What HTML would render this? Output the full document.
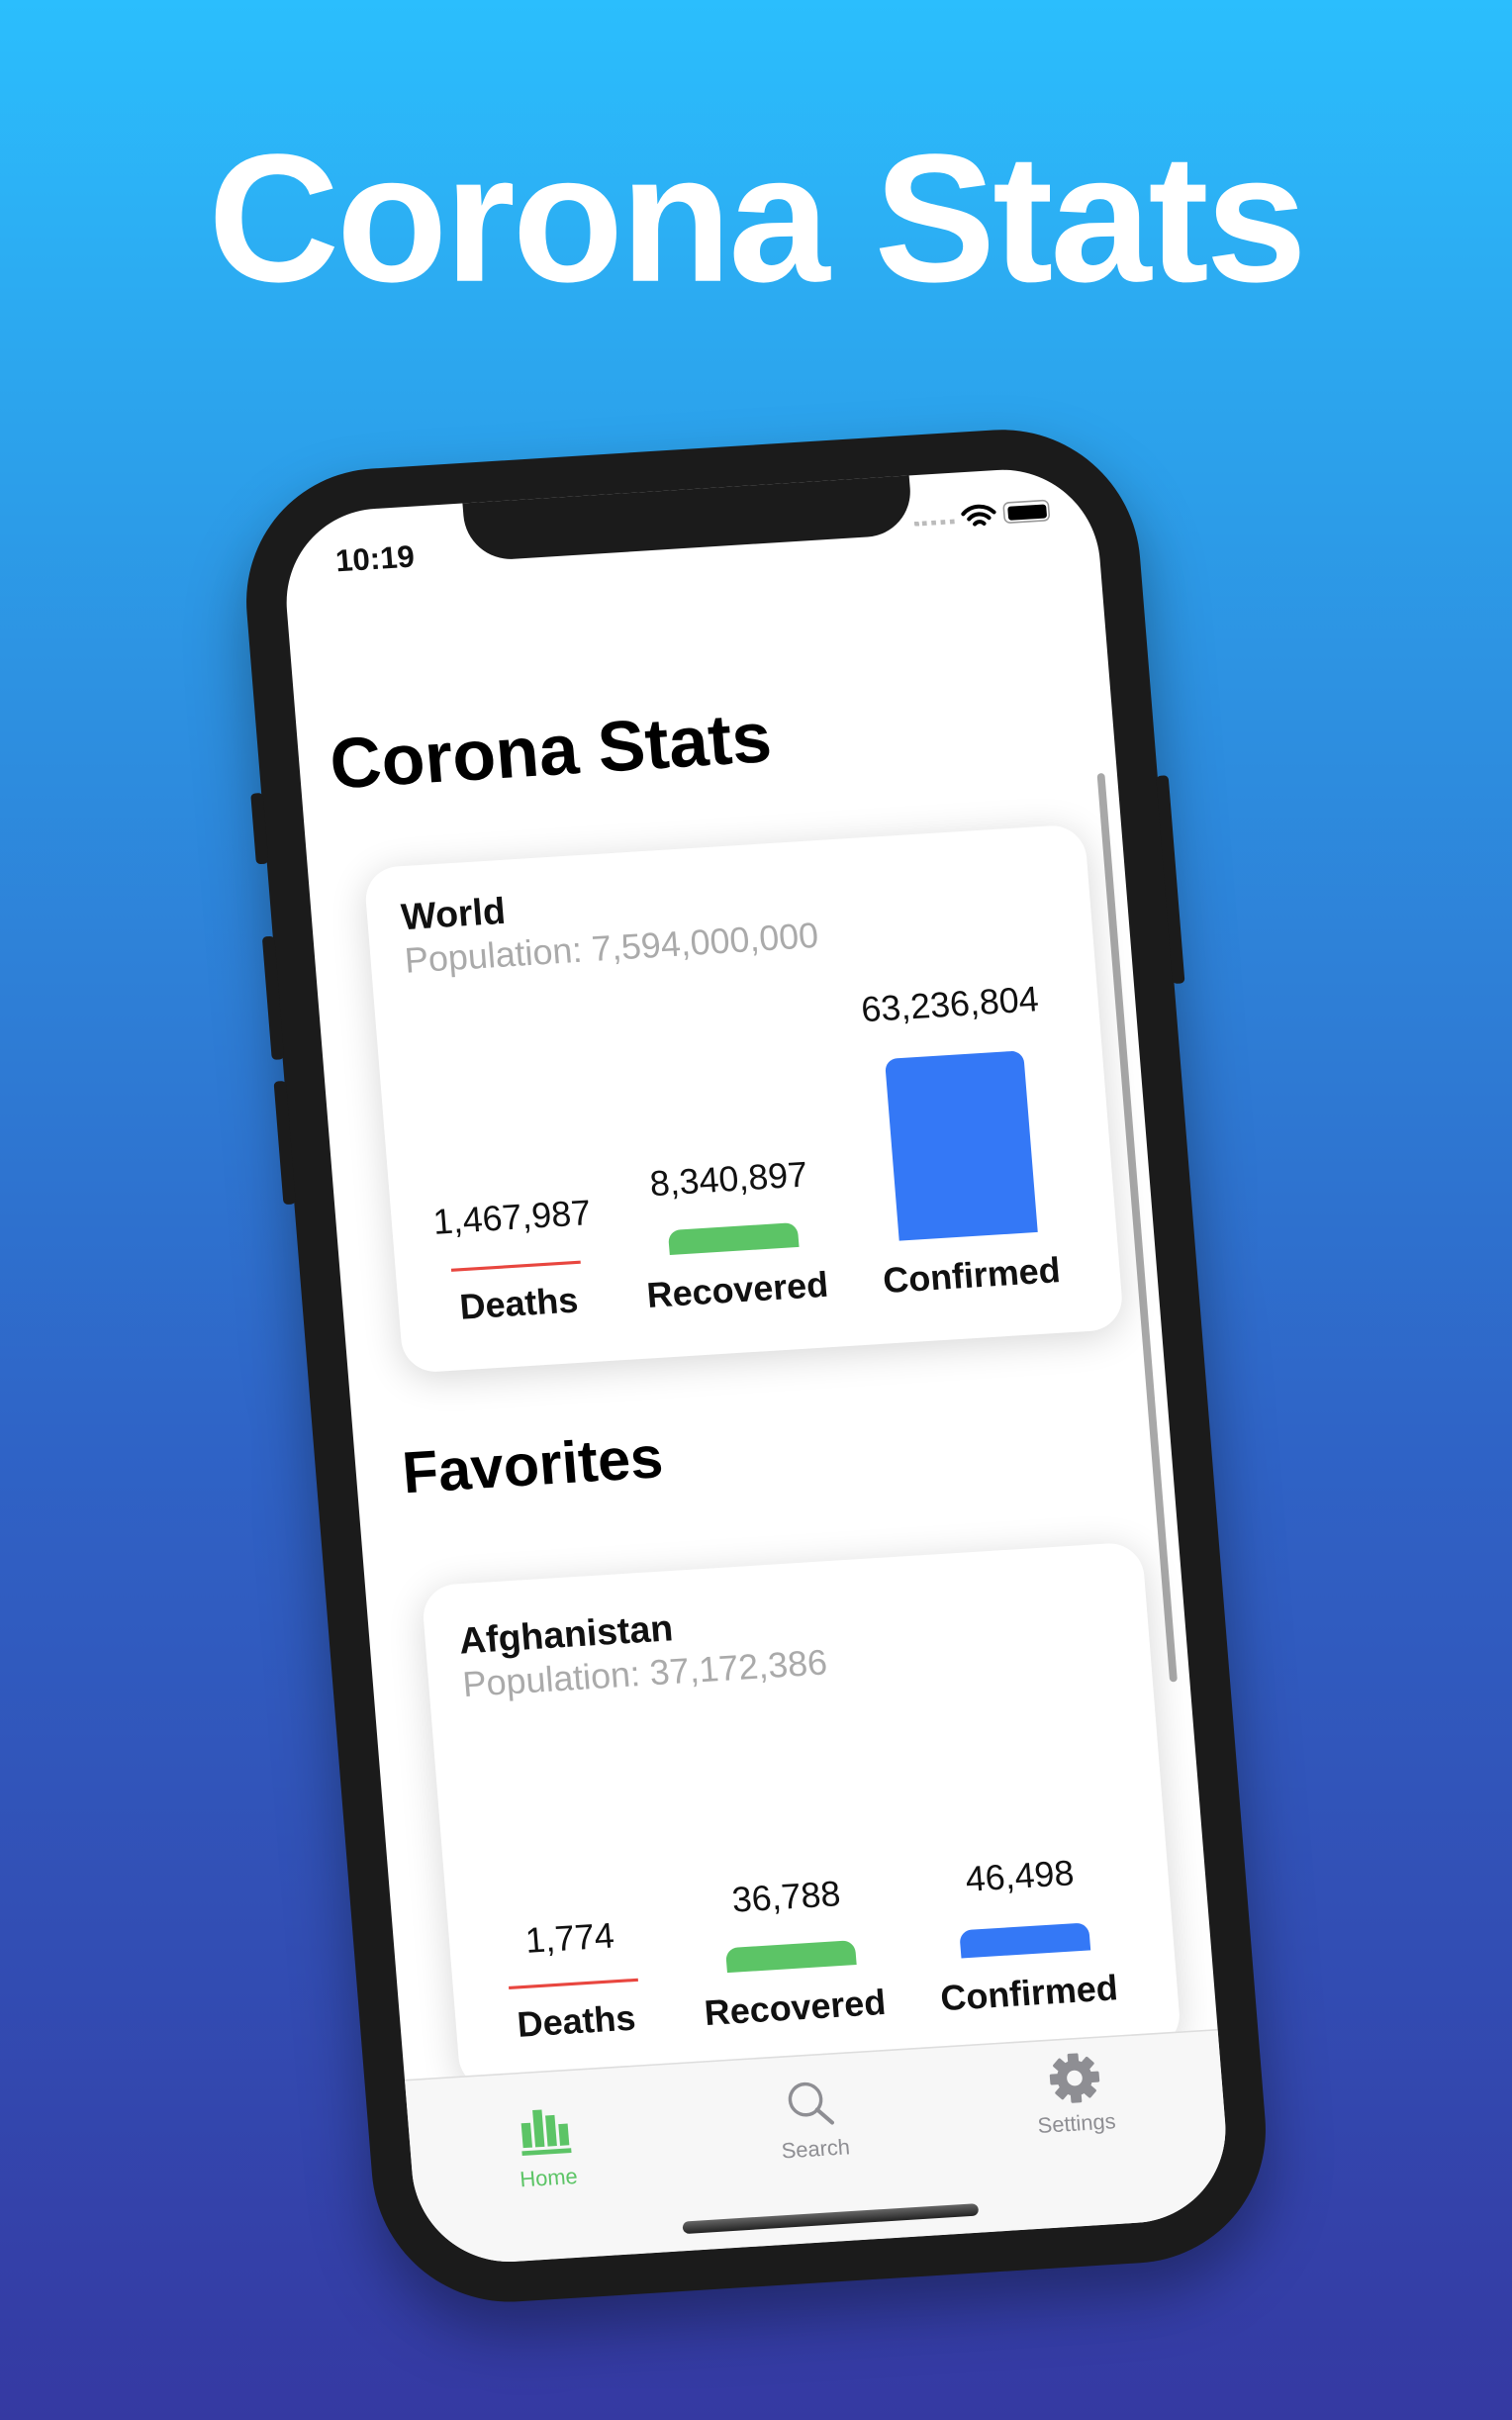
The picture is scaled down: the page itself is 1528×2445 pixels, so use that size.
<!DOCTYPE html>
<html><head><meta charset="utf-8"><style>
*{margin:0;padding:0;box-sizing:border-box}
html,body{width:1528px;height:2445px;overflow:hidden}
body{background:linear-gradient(180deg,#2bbefd 0%,#2d8fe0 30%,#2f63c6 60%,#3539a2 100%);font-family:"Liberation Sans",sans-serif}
#w{position:absolute;left:0;top:0;width:980px;height:1568px;transform:scale(1.5592);transform-origin:0 0}
h1{position:absolute;left:0;width:980px;top:72px;text-align:center;color:#fff;font-size:118px;font-weight:bold;letter-spacing:-2px;line-height:140px}
#phone{position:absolute;left:200px;top:290px;width:580px;height:1190px;background:#1b1b1b;border-radius:88px;transform:matrix(0.998,-0.062,0.08,0.998,0,0);transform-origin:50% 50%;box-shadow:0 20px 40px rgba(0,0,0,.35)}
.btn{position:absolute;background:#1b1b1b;border-radius:3px;width:8px}
#screen{position:absolute;left:26px;top:26px;width:528px;height:1138px;background:#fff;border-radius:62px;overflow:hidden}
#notch{position:absolute;left:119px;top:-2px;width:290px;height:40px;background:#1b1b1b;border-radius:0 0 30px 30px}
.time{position:absolute;left:34px;top:22px;font-size:20px;font-weight:bold;color:#111}
.big{position:absolute;font-weight:bold;color:#000}
.card{position:absolute;left:36px;width:468px;height:328px;background:#fff;border-radius:22px;box-shadow:0 4px 24px rgba(0,0,0,.16)}
.ct{position:absolute;left:22px;top:20px;font-size:24px;font-weight:bold;color:#111}
.cp{position:absolute;left:22px;top:48px;font-size:23px;color:#aaa}
.col{position:absolute;width:150px;margin-left:-75px;text-align:center}
.num{position:absolute;left:0;width:150px;font-size:23px;color:#111}
.bar{position:absolute;left:50%;border-radius:8px 8px 0 0}
.lab{position:absolute;left:0;width:150px;top:274px;font-size:23px;font-weight:bold;color:#111}
#tab{position:absolute;left:0;top:1016px;width:528px;height:122px;background:#f7f7f7;border-top:1px solid #ddd}
.tl{position:absolute;width:100px;margin-left:-50px;text-align:center;font-size:14px;color:#8e8e93}
</style></head><body><div id="w">
<h1>Corona Stats</h1>
<div id="phone">
<div class="btn" style="left:-7px;top:205px;height:46px"></div>
<div class="btn" style="left:-7px;top:298px;height:80px"></div>
<div class="btn" style="left:-7px;top:392px;height:80px"></div>
<div class="btn" style="right:-7px;top:230px;height:135px"></div>
<div id="screen">
<div id="notch"></div>
<div class="time">10:19</div>
<div style="position:absolute;left:410px;top:30px;width:26px;height:3px;border-top:3px dotted #bbb"></div>
<svg style="position:absolute;left:440px;top:20px" width="24" height="18" viewBox="0 0 24 18"><path d="M2 7a14 14 0 0 1 20 0M5.5 10.5a9 9 0 0 1 13 0M9 14a4 4 0 0 1 6 0" stroke="#000" stroke-width="2.6" fill="none" stroke-linecap="round"/></svg>
<div style="position:absolute;left:468px;top:21px;width:30px;height:14px;border:1.5px solid #999;border-radius:4px;padding:1.5px"><div style="width:100%;height:100%;background:#000;border-radius:2px"></div></div>
<div class="big" style="left:20px;top:136px;font-size:46px">Corona Stats</div>
<div style="position:absolute;right:8px;top:200px;width:5px;height:590px;background:#a8a8a8;border-radius:3px"></div>
<div class="card" style="top:232px">
<div class="ct">World</div><div class="cp">Population: 7,594,000,000</div>
<div class="col" style="left:78px"><div class="num" style="top:218px">1,467,987</div><div class="bar" style="top:262px;width:84px;margin-left:-42px;height:2px;background:#e8463f;border-radius:0"></div><div class="lab">Deaths</div></div>
<div class="col" style="left:220px"><div class="num" style="top:202px">8,340,897</div><div class="bar" style="top:246px;width:84px;margin-left:-42px;height:16px;background:#5cc466"></div><div class="lab">Recovered</div></div>
<div class="col" style="left:372px"><div class="num" style="top:98px">63,236,804</div><div class="bar" style="top:144px;width:90px;margin-left:-45px;height:118px;background:#3478f6"></div><div class="lab">Confirmed</div></div>
</div>
<div class="big" style="left:30px;top:604px;font-size:38px">Favorites</div>
<div class="card" style="top:698px">
<div class="ct" style="top:24px">Afghanistan</div><div class="cp" style="top:52px">Population: 37,172,386</div>
<div class="col" style="left:78px"><div class="num" style="top:220px">1,774</div><div class="bar" style="top:262px;width:84px;margin-left:-42px;height:2px;background:#e8463f;border-radius:0"></div><div class="lab">Deaths</div></div>
<div class="col" style="left:220px"><div class="num" style="top:202px">36,788</div><div class="bar" style="top:246px;width:84px;margin-left:-42px;height:16px;background:#5cc466"></div><div class="lab">Recovered</div></div>
<div class="col" style="left:372px"><div class="num" style="top:198px">46,498</div><div class="bar" style="top:244px;width:84px;margin-left:-42px;height:18px;background:#3478f6"></div><div class="lab">Confirmed</div></div>
</div>
<div id="tab">
<svg style="position:absolute;left:70px;top:20px" width="36" height="34" viewBox="0 0 36 34"><rect x="3" y="12" width="6" height="16" fill="#5cc466"/><rect x="11" y="4" width="6" height="24" fill="#5cc466"/><rect x="19" y="8" width="6" height="20" fill="#5cc466"/><rect x="27" y="14" width="6" height="14" fill="#5cc466"/><rect x="2" y="30" width="32" height="3" fill="#5cc466"/></svg>
<div class="tl" style="left:88px;top:60px;color:#5cc466">Home</div>
<svg style="position:absolute;left:244px;top:14px" width="34" height="34" viewBox="0 0 34 34"><circle cx="14" cy="14" r="10" stroke="#8e8e93" stroke-width="2.2" fill="none"/><path d="M21 21l9 9" stroke="#8e8e93" stroke-width="2.6" stroke-linecap="round"/></svg>
<div class="tl" style="left:262px;top:52px">Search</div>
<svg style="position:absolute;left:416px;top:8px" width="34" height="34" viewBox="0 0 34 34"><g fill="#8e8e93" transform="translate(17 17)"><rect x="-3.5" y="-16" width="7" height="32" rx="1"/><rect x="-3.5" y="-16" width="7" height="32" rx="1" transform="rotate(45)"/><rect x="-3.5" y="-16" width="7" height="32" rx="1" transform="rotate(90)"/><rect x="-3.5" y="-16" width="7" height="32" rx="1" transform="rotate(135)"/><circle r="11.5"/></g><circle cx="17" cy="17" r="5" fill="#f7f7f7"/></svg>
<div class="tl" style="left:432px;top:46px">Settings</div>
<div style="position:absolute;left:172px;top:102px;width:192px;height:8px;background:linear-gradient(#666,#222);border-radius:4px"></div>
</div>
</div>
</div>
</div></body></html>
